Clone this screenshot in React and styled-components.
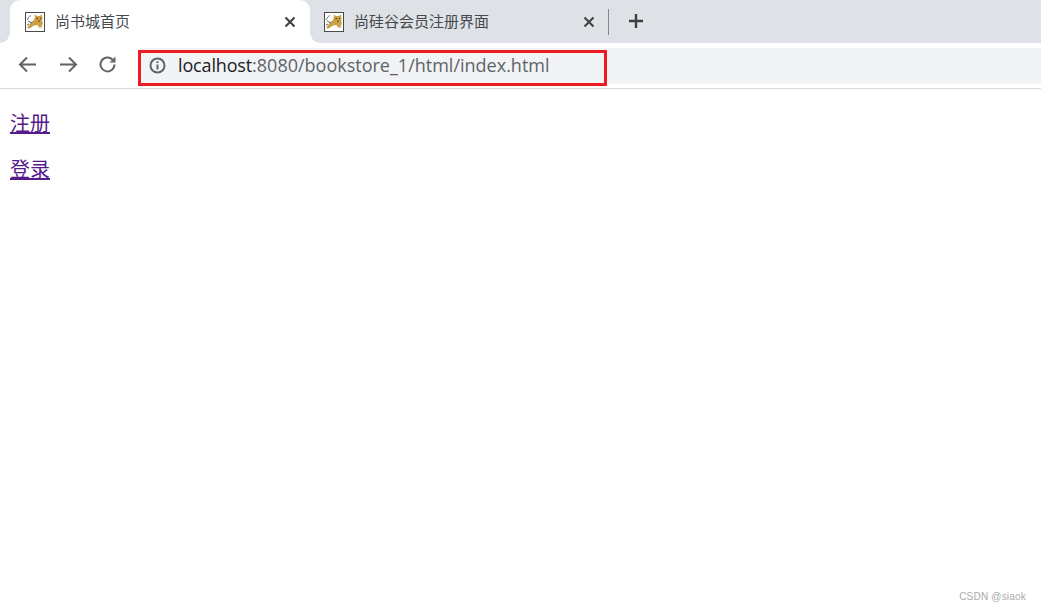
import React from 'react';
import styled, { createGlobalStyle } from 'styled-components';

const GlobalStyle = createGlobalStyle`
  html, body {
    margin: 0;
    padding: 0;
    background: #fff;
  }
  body {
    font-family: "Liberation Sans", "Noto Sans CJK SC", sans-serif;
  }
`;

const Page = styled.div`
  position: relative;
  width: 1041px;
  height: 610px;
  overflow: hidden;
  background: #fff;
`;

const TabStrip = styled.div`
  display: flex;
  align-items: stretch;
  height: 43px;
  padding-left: 10px;
  background: #dee1e6;
`;

const Tab = styled.div`
  position: relative;
  display: flex;
  align-items: center;
  flex: none;
  width: ${(p) => p.$width}px;
  padding-left: ${(p) => p.$inset}px;
  box-sizing: border-box;
  border-radius: 10px 10px 0 0;
  background: ${(p) => (p.$active ? '#fff' : 'transparent')};

  ${(p) =>
    p.$active &&
    `
    &::before, &::after {
      content: "";
      position: absolute;
      bottom: 0;
      width: 10px;
      height: 10px;
    }
    &::before {
      left: -10px;
      background: radial-gradient(circle at 0 0, #dee1e6 9.5px, #fff 10px);
    }
    &::after {
      right: -10px;
      background: radial-gradient(circle at 100% 0, #dee1e6 9.5px, #fff 10px);
    }
  `}
`;

const TabTitle = styled.span`
  flex: 1;
  margin-left: 10px;
  font-size: 15px;
  line-height: 20px;
  color: #45484c;
  white-space: nowrap;
`;

const CloseButton = styled.svg`
  flex: none;
  width: 12px;
  height: 12px;
  margin-right: ${(p) => p.$gap}px;
  stroke: #3c4043;
  stroke-width: 2;
  fill: none;
`;

const Divider = styled.div`
  flex: none;
  width: 1px;
  height: 26px;
  margin: 9px 0 0 -1px;
  background: #84888d;
`;

const NewTab = styled.svg`
  flex: none;
  width: 16px;
  height: 16px;
  margin: 13px 0 0 19px;
  stroke: #3c4043;
  stroke-width: 2.4;
  fill: none;
`;

const Toolbar = styled.div`
  display: flex;
  align-items: center;
  height: 46px;
  box-sizing: border-box;
  padding: 0 0 2px 17px;
  background: #fff;
  border-bottom: 1px solid #d9dbde;
`;

const NavIcon = styled.svg`
  flex: none;
  width: 21px;
  height: 21px;
  margin-right: ${(p) => p.$gap}px;
  stroke: #5f6368;
  stroke-width: 2;
  fill: none;
`;

const AddressBar = styled.div`
  position: relative;
  display: flex;
  align-items: center;
  flex: 1;
  align-self: flex-start;
  height: 36px;
  box-sizing: border-box;
  margin: 5px 0 0 0;
  padding: 0 0 2px 9px;
  background: #f1f3f4;
`;

const InfoIcon = styled.svg`
  flex: none;
  width: 17px;
  height: 17px;
`;

const Url = styled.div`
  margin-left: 12px;
  font-family: "Open Sans", "Liberation Sans", sans-serif;
  font-size: 18px;
  line-height: 24px;
  color: #5f6368;
  white-space: nowrap;
`;

const Host = styled.span`
  color: #202124;
  letter-spacing: -0.15px;
`;

const Highlight = styled.div`
  position: absolute;
  left: 138px;
  top: 50px;
  width: 469px;
  height: 36px;
  box-sizing: border-box;
  border: 3px solid #ed1c24;
`;

const Content = styled.div`
  padding: 21px 10px 0;
`;

const Para = styled.p`
  margin: 0 0 20px;
  font-size: 20px;
  line-height: 26px;
  font-family: "Noto Sans CJK SC", sans-serif;
`;

const PageLink = styled.a`
  color: #551a8b;
  text-decoration: underline;
`;

const Watermark = styled.div`
  position: absolute;
  right: 15px;
  bottom: 7px;
  font-size: 10px;
  line-height: 12px;
  letter-spacing: 0.2px;
  color: #aaa;
`;

const Favicon = () => (
  <svg width="20" height="20" viewBox="0 0 20 20" style={{ flex: 'none' }}>
    <rect x="0.5" y="0.5" width="19" height="19" fill="#fff" stroke="#4a4a4a" />
    <path d="M2.500 8c.3-2.300 1.500-3.800 3.500-4.300" stroke="#777" strokeWidth="1" fill="none" />
    <path d="M9.500 2.500l2.500 1.500h2.500l2.500-1.500.5 4-.5 2.500 1 2.500-1.500 2.500 1 1.500h-3.500l-1.500-2.500-3.500.5-4.500 3-2.500-.5 2.500-3.500 2.500-3 2-1.500 1-3z" fill="#c9a044" />
    <path d="M3 9l4 2M4 12l-2 1" stroke="#666" strokeWidth="1" fill="none" />
    <path d="M11.500 6.500h1.500M15 6.500h1" stroke="#4a3410" strokeWidth="1" />
    <path d="M13 9h2" stroke="#6b4e18" strokeWidth="1" />
  </svg>
);

const CloseIcon = ({ gap }) => (
  <CloseButton $gap={gap} viewBox="0 0 12 12">
    <path d="M1.500 1.500l9 9M10.500 1.500l-9 9" />
  </CloseButton>
);

const App = () => {
  return (
    <Page>
      <GlobalStyle />
      <TabStrip>
        <Tab $active $width={300} $inset={15}>
          <Favicon />
          <TabTitle>尚书城首页</TabTitle>
          <CloseIcon gap={14} />
        </Tab>
        <Tab $width={299} $inset={14}>
          <Favicon />
          <TabTitle>尚硅谷会员注册界面</TabTitle>
          <CloseIcon gap={14} />
        </Tab>
        <Divider />
        <NewTab viewBox="0 0 16 16">
          <path d="M8 1v14M1 8h14" />
        </NewTab>
      </TabStrip>
      <Toolbar>
        <NavIcon $gap={20} viewBox="0 0 21 21">
          <path d="M19 10.500H3M10 3.500l-7 7 7 7" />
        </NavIcon>
        <NavIcon $gap={18} viewBox="0 0 21 21">
          <path d="M2 10.500h16M11 3.500l7 7-7 7" />
        </NavIcon>
        <NavIcon $gap={22} viewBox="0 0 21 21">
          <path d="M17.500 10.500a7 7 0 1 1-2-5" />
          <path d="M18.500 2.500v6h-6z" fill="#5f6368" stroke="none" />
        </NavIcon>
        <AddressBar>
          <InfoIcon viewBox="0 0 17 17">
            <circle cx="8.500" cy="8.500" r="7" fill="none" stroke="#5f6368" strokeWidth="2" />
            <path d="M8.500 7.500v5M8.500 4.300v1.800" stroke="#5f6368" strokeWidth="2" />
          </InfoIcon>
          <Url>
            <Host>localhost</Host>:8080/bookstore_1/html/index.html
          </Url>
        </AddressBar>
      </Toolbar>
      <Highlight />
      <Content>
        <Para><PageLink href="#">注册</PageLink></Para>
        <Para><PageLink href="#">登录</PageLink></Para>
      </Content>
      <Watermark>CSDN @siaok</Watermark>
    </Page>
  );
};

export default App;
